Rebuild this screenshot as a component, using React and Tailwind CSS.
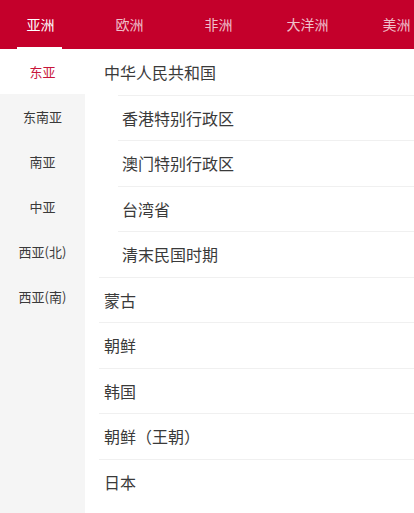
import { useState } from 'react';

const continents = ['亚洲', '欧洲', '非洲', '大洋洲', '美洲'];
const regions = ['东亚', '东南亚', '南亚', '中亚', '西亚(北)', '西亚(南)'];
const countries = [
  { name: '中华人民共和国' },
  { name: '香港特别行政区', sub: true },
  { name: '澳门特别行政区', sub: true },
  { name: '台湾省', sub: true },
  { name: '清末民国时期', sub: true },
  { name: '蒙古' },
  { name: '朝鲜' },
  { name: '韩国' },
  { name: '朝鲜（王朝）' },
  { name: '日本' },
];

export default function App() {
  const [tab, setTab] = useState(0);
  const [region, setRegion] = useState(0);

  return (
    <div
      className="h-[513px] w-[414px] overflow-hidden bg-white"
      style={{ fontFamily: '"Noto Sans CJK SC", "Noto Sans", sans-serif' }}
    >
      <div className="flex h-[49px] overflow-hidden bg-[#c4002b]">
        <div className="-ml-[4px] flex">
          {continents.map((c, i) => (
            <button
              key={c}
              onClick={() => setTab(i)}
              className="relative flex w-[89px] shrink-0 items-center justify-center text-[14px]"
            >
              <span className={i === tab ? 'text-white' : 'text-white/75'}>{c}</span>
              {i === tab && (
                <span className="absolute bottom-0 left-[21px] h-[2px] w-[45px] bg-white" />
              )}
            </button>
          ))}
        </div>
      </div>

      <div className="flex">
        <div className="h-[464px] w-[85px] shrink-0 bg-[#f5f5f5]">
          {regions.map((r, i) => (
            <button
              key={r}
              onClick={() => setRegion(i)}
              className={`flex h-[45px] w-full items-center justify-center text-[13px] ${
                i === region ? 'bg-white text-[#c8163a]' : 'text-[#3a3a3a]'
              }`}
            >
              {r}
            </button>
          ))}
        </div>

        <div className="flex-1">
          {countries.map((c, i) => (
            <div
              key={c.name}
              className={`flex h-[45.5px] items-center text-[16px] text-[#3a3a3a] ${
                i > 0 ? 'border-t border-[#f0f0f0]' : ''
              } ${c.sub ? 'ml-[33px] pl-[4px]' : 'ml-[14px] pl-[5px]'}`}
            >
              {c.name}
            </div>
          ))}
        </div>
      </div>
    </div>
  );
}
